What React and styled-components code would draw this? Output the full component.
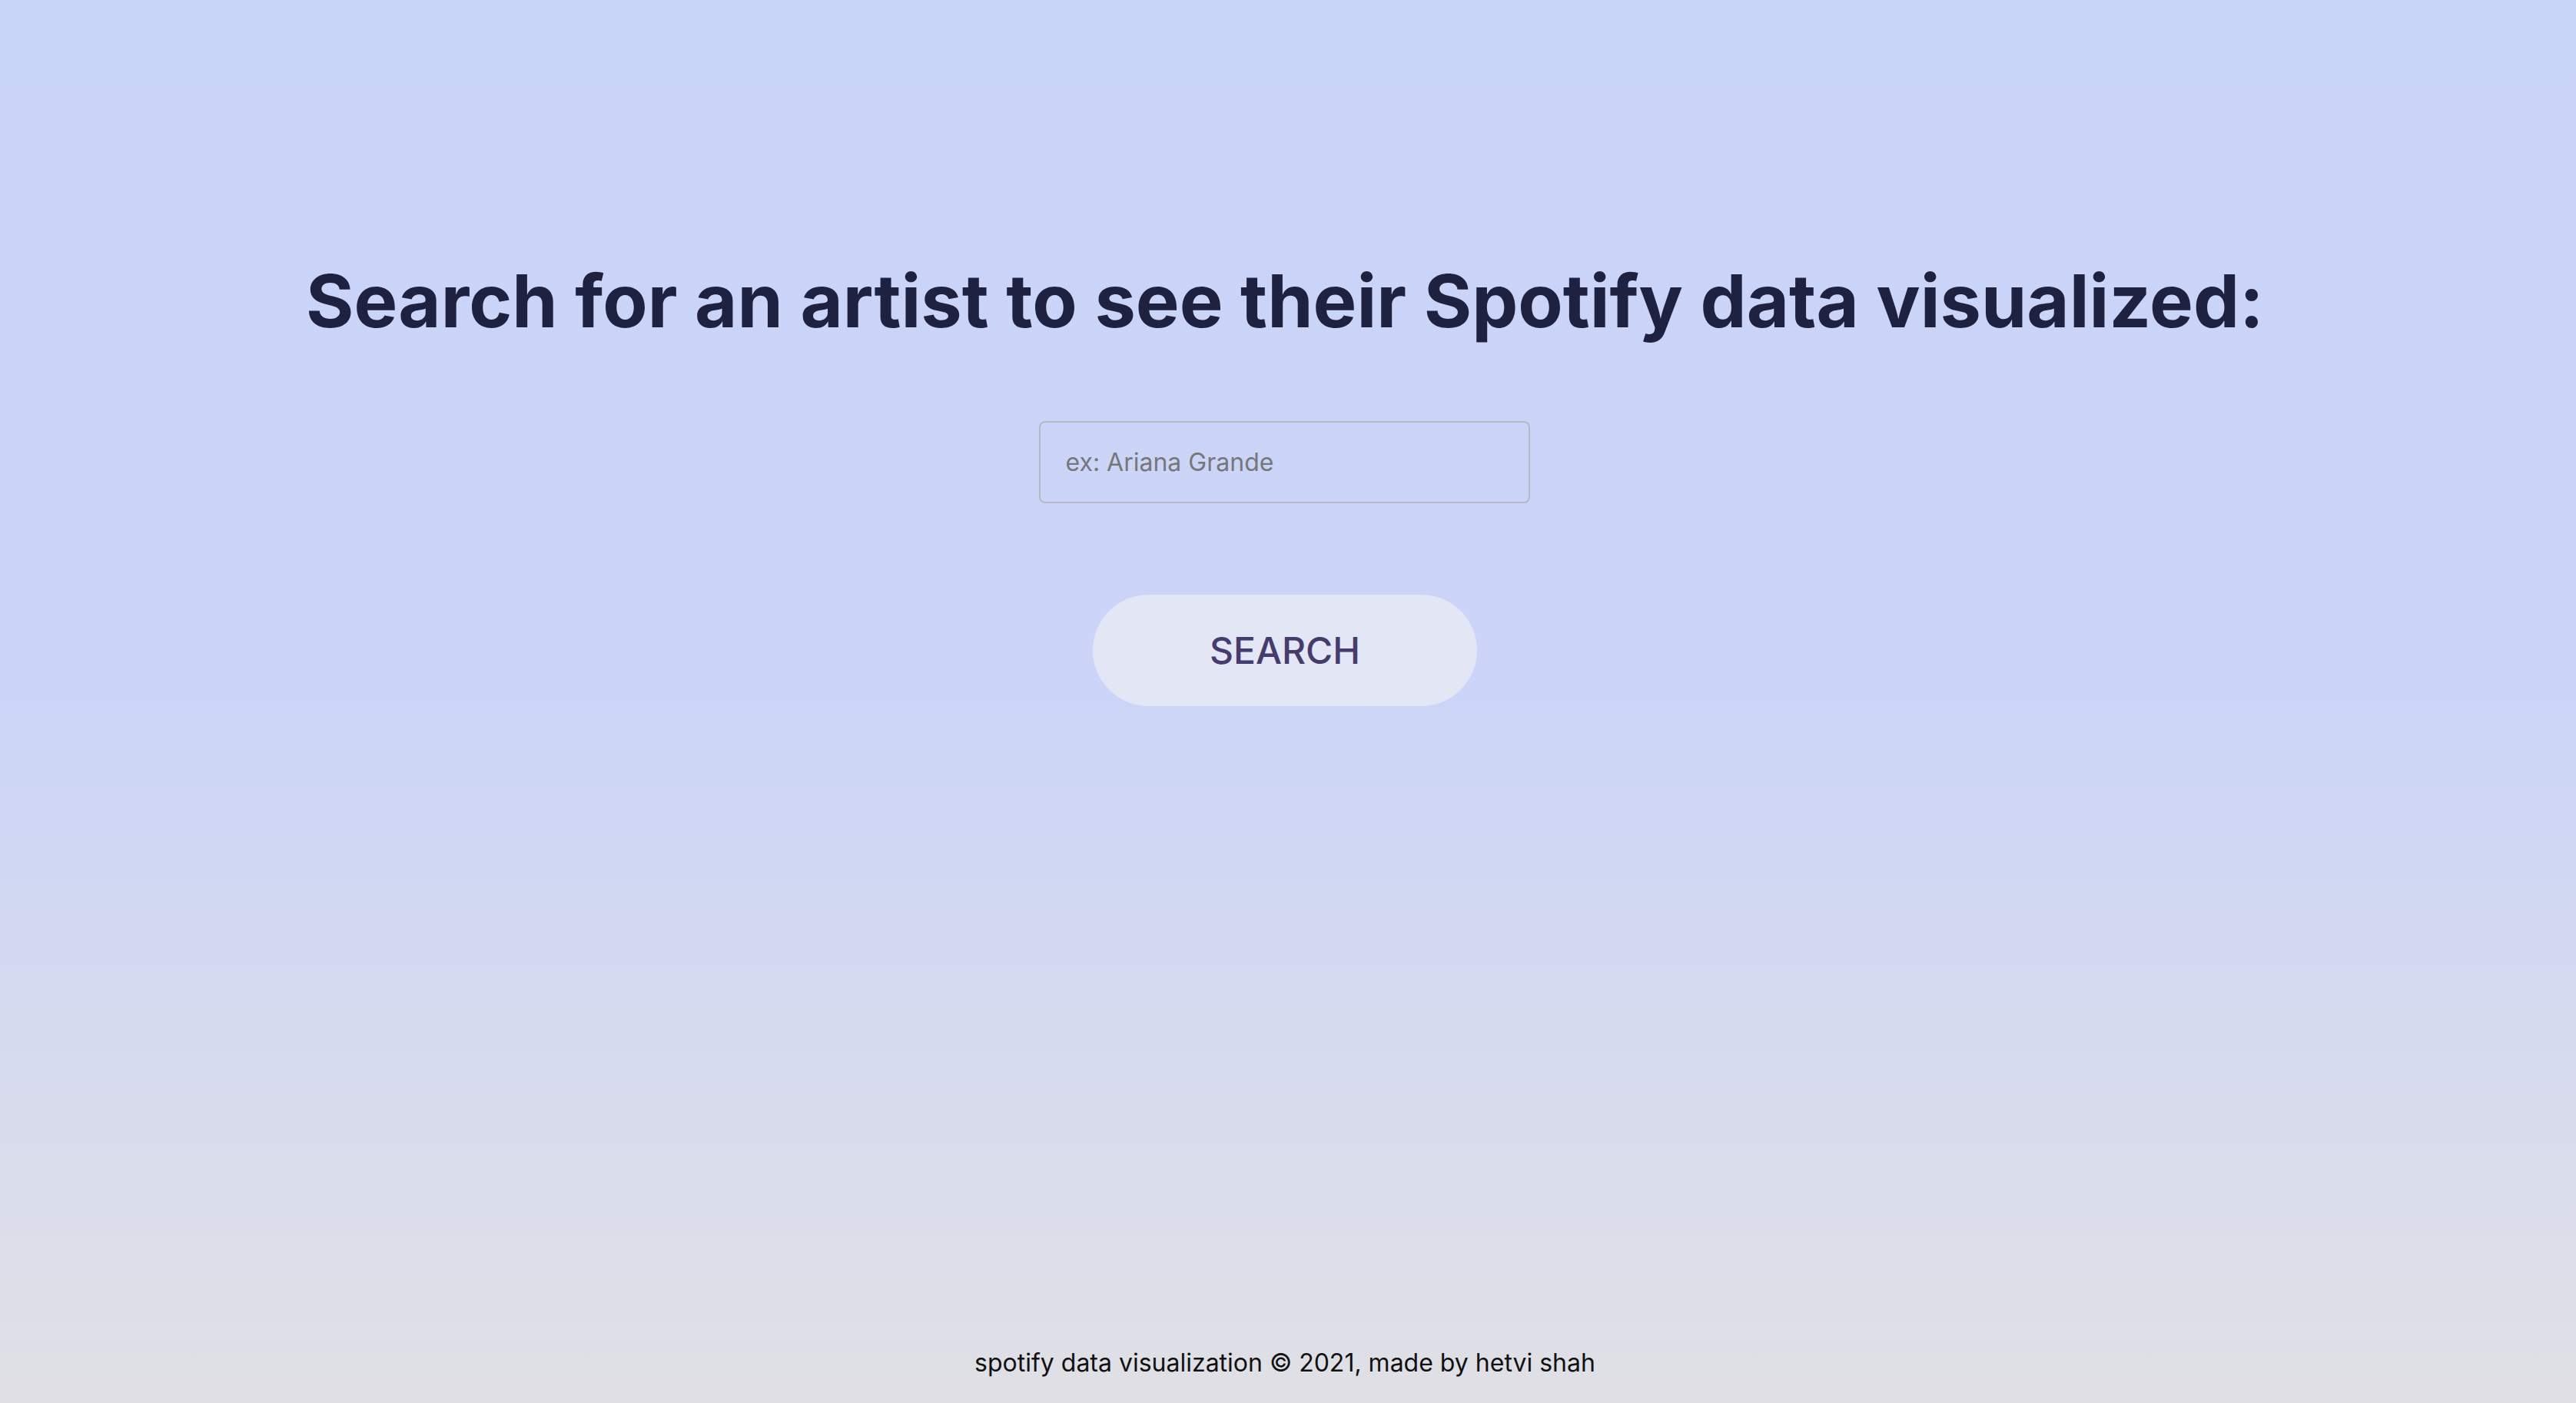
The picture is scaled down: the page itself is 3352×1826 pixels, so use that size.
import React from "react";
import styled, { createGlobalStyle } from "styled-components";

const GlobalStyle = createGlobalStyle`
  html, body {
    margin: 0;
    padding: 0;
  }

  body {
    font-family: Inter, "Noto Sans", sans-serif;
  }
`;

const Page = styled.div`
  min-height: 100vh;
  box-sizing: border-box;
  padding-right: 8px;
  display: flex;
  flex-direction: column;
  align-items: center;
  background: linear-gradient(180deg, #c9d4f9 0%, #ccd5f7 50%, #e0e0e5 100%);
`;

const Main = styled.main`
  flex: 1;
  display: flex;
  flex-direction: column;
  align-items: center;
  padding-top: 334px;
`;

const Title = styled.h1`
  margin: 0;
  font-size: 95.4px;
  line-height: 116px;
  font-weight: 700;
  color: #1f2140;
  text-align: center;
`;

const SearchInput = styled.input`
  margin-top: 98px;
  width: 639px;
  height: 107px;
  box-sizing: border-box;
  padding: 0 32px;
  border: 2px solid #b6b8c4;
  border-radius: 8px;
  background: transparent;
  font-family: Inter, "Noto Sans", sans-serif;
  font-size: 32px;
  color: #333;
  outline: none;

  &::placeholder {
    color: #77777a;
  }
`;

const SearchButton = styled.button`
  margin-top: 119px;
  width: 500px;
  height: 145px;
  border: none;
  border-radius: 73px;
  background: #e3e6f5;
  font-family: Inter, "Noto Sans", sans-serif;
  font-size: 48px;
  font-weight: 500;
  color: #463b6d;
  cursor: pointer;
`;

const Footer = styled.footer`
  padding-bottom: 32px;
  font-size: 32px;
  line-height: 40px;
  color: #111;
`;

const App = () => {
  return (
    <>
      <GlobalStyle />
      <Page>
        <Main>
          <Title>Search for an artist to see their Spotify data visualized:</Title>
          <SearchInput type="text" placeholder="ex: Ariana Grande" />
          <SearchButton>SEARCH</SearchButton>
        </Main>
        <Footer>spotify data visualization © 2021, made by hetvi shah</Footer>
      </Page>
    </>
  );
};

export default App;
